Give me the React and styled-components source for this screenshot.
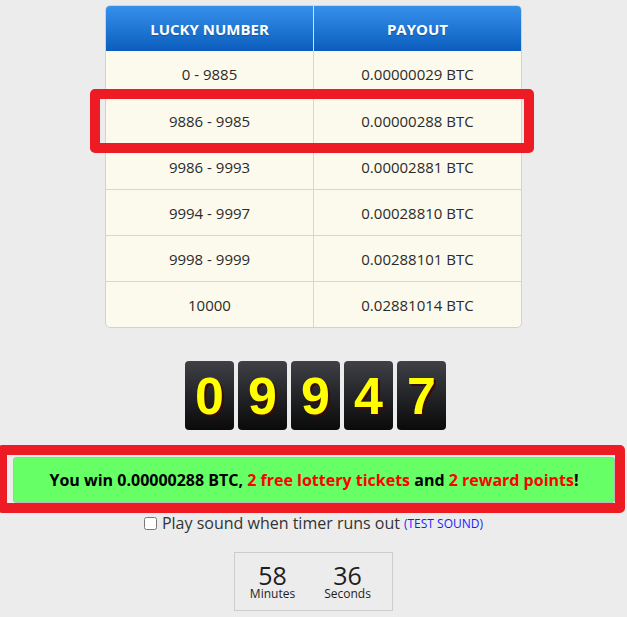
import React from 'react';
import styled, { createGlobalStyle } from 'styled-components';

const GlobalStyle = createGlobalStyle`
  body {
    margin: 0;
    background: #ececec;
    font-family: "Open Sans", "Liberation Sans", sans-serif;
    color: #333;
  }
`;

const Page = styled.div`
  display: flex;
  flex-direction: column;
  align-items: center;
  padding-top: 5px;
  padding-bottom: 6px;
`;

const Table = styled.div`
  width: 415px;
  border: 1px solid #d2d2d2;
  border-radius: 5px;
  background: #fcfaec;
`;

const HeadRow = styled.div`
  display: grid;
  grid-template-columns: 207px 1fr;
  height: 45px;
  border-radius: 4px 4px 0 0;
  background: linear-gradient(#3691eb, #0b5dbd);
`;

const HeadCell = styled.div`
  display: flex;
  align-items: center;
  justify-content: center;
  color: #fff;
  font-weight: 700;
  font-size: 15px;
  text-shadow: 0 1px 1px rgba(0, 0, 0, 0.25);
  & + & {
    border-left: 1px solid #cfe2f7;
  }
`;

const Row = styled.div`
  position: relative;
  display: grid;
  grid-template-columns: 207px 1fr;
  height: ${p => (p.$first ? 46 : 45)}px;
  border-top: ${p => (p.$first ? 'none' : '1px solid #d6d6d6')};
`;

const Cell = styled.div`
  display: flex;
  align-items: center;
  justify-content: center;
  font-size: 15px;
  color: #2b2b2b;
  & + & {
    border-left: 1px solid #d6d6d6;
  }
`;

const Highlight = styled.div`
  position: absolute;
  top: ${p => p.$top}px;
  bottom: ${p => p.$bottom}px;
  left: ${p => p.$left}px;
  right: ${p => p.$right}px;
  border: 10px solid #ed1c24;
  border-radius: 5px;
  pointer-events: none;
  z-index: 2;
`;

const Digits = styled.div`
  display: flex;
  gap: 4px;
  margin-top: 33px;
  margin-left: 4px;
`;

const DigitBox = styled.div`
  width: 49px;
  height: 69px;
  border-radius: 4px;
  background: linear-gradient(#404147, #26272b 45%, #0a0a0a);
  display: flex;
  align-items: center;
  justify-content: center;
  font-family: "Liberation Sans", Arial, sans-serif;
  font-weight: 700;
  font-size: 52px;
  color: #ffff00;
  text-shadow: 2px 2px 0 #3b0a00;
`;

const Notice = styled.div`
  position: relative;
  align-self: stretch;
  margin: 27px 12px 0 13px;
  height: 44px;
  border: 1px solid #b9b9b9;
  border-radius: 3px;
  background: #66ff66;
  display: flex;
  align-items: center;
  justify-content: center;
  font-weight: 700;
  font-size: 16px;
  color: #000;
`;

const Red = styled.span`
  color: #ff0000;
`;

const SoundRow = styled.label`
  display: flex;
  align-items: center;
  margin-top: 9px;
  font-size: 16px;
  color: #333;
  line-height: 20px;
  input {
    margin: 0 5px 0 0;
    width: 13px;
    height: 13px;
  }
`;

const TestLink = styled.a`
  margin-left: 4px;
  margin-top: 2px;
  font-size: 12px;
  color: #1a1aff;
  text-decoration: none;
`;

const Timer = styled.div`
  display: flex;
  margin-top: 18px;
  width: 150px;
  height: 57px;
  padding-right: 7px;
  border: 1px solid #cccccc;
`;

const TimeUnit = styled.div`
  width: 75px;
  display: flex;
  flex-direction: column;
  align-items: center;
  padding-top: 9px;
`;

const TimeValue = styled.div`
  font-size: 25px;
  line-height: 26px;
  color: #1e1e1e;
`;

const TimeLabel = styled.div`
  font-size: 12px;
  line-height: 12px;
  color: #1e1e1e;
`;

const payouts = [
  ['0 - 9885', '0.00000029 BTC'],
  ['9886 - 9985', '0.00000288 BTC'],
  ['9986 - 9993', '0.00002881 BTC'],
  ['9994 - 9997', '0.00028810 BTC'],
  ['9998 - 9999', '0.00288101 BTC'],
  ['10000', '0.02881014 BTC'],
];

export default function App() {
  return (
    <>
      <GlobalStyle />
      <Page>
        <Table>
          <HeadRow>
            <HeadCell>LUCKY NUMBER</HeadCell>
            <HeadCell>PAYOUT</HeadCell>
          </HeadRow>
          {payouts.map(([range, payout], i) => (
            <Row key={range} $first={i === 0}>
              <Cell>{range}</Cell>
              <Cell>{payout}</Cell>
              {i === 1 && <Highlight $top={-9} $bottom={-10} $left={-16} $right={-13} />}
            </Row>
          ))}
        </Table>

        <Digits>
          {'09947'.split('').map((d, i) => (
            <DigitBox key={i}>{d}</DigitBox>
          ))}
        </Digits>

        <Notice>
          <span>
            You win 0.00000288 BTC, <Red>2 free lottery tickets</Red> and{' '}
            <Red>2 reward points</Red>!
          </span>
          <Highlight $top={-13} $bottom={-11} $left={-17} $right={-11} />
        </Notice>

        <SoundRow>
          <input type="checkbox" />
          Play sound when timer runs out
          <TestLink href="#">(TEST SOUND)</TestLink>
        </SoundRow>

        <Timer>
          <TimeUnit>
            <TimeValue>58</TimeValue>
            <TimeLabel>Minutes</TimeLabel>
          </TimeUnit>
          <TimeUnit>
            <TimeValue>36</TimeValue>
            <TimeLabel>Seconds</TimeLabel>
          </TimeUnit>
        </Timer>
      </Page>
    </>
  );
}
